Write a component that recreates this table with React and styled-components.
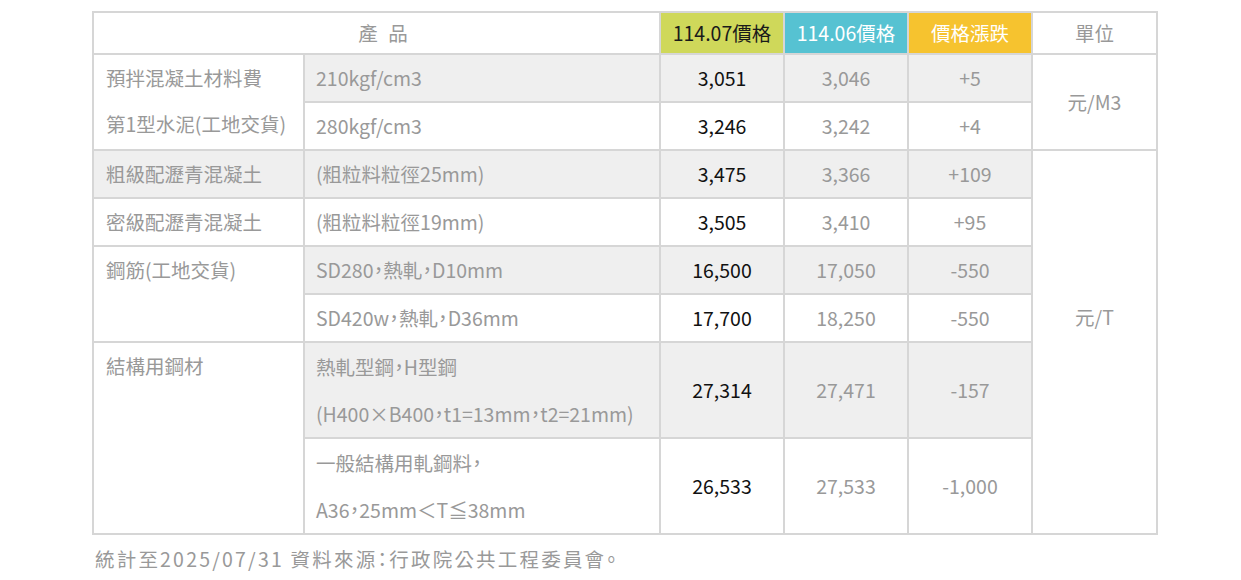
import React from 'react';
import styled, { createGlobalStyle } from 'styled-components';

const GlobalStyle = createGlobalStyle`
  body {
    margin: 0;
    background: #fff;
    font-family: "Noto Sans CJK TC", "Noto Sans", sans-serif;
    font-feature-settings: "palt";
  }
`;

const rows = [
  {
    group: ['預拌混凝土材料費', '第1型水泥(工地交貨)'],
    span: 2,
    spec: ['210kgf/cm3'],
    now: '3,051',
    prev: '3,046',
    diff: '+5',
    unit: { label: '元/M3', span: 2 },
  },
  { spec: ['280kgf/cm3'], now: '3,246', prev: '3,242', diff: '+4' },
  {
    group: ['粗級配瀝青混凝土'],
    spec: ['(粗粒料粒徑25mm)'],
    now: '3,475',
    prev: '3,366',
    diff: '+109',
    unit: { label: '元/T', span: 6, lifted: true },
  },
  {
    group: ['密級配瀝青混凝土'],
    spec: ['(粗粒料粒徑19mm)'],
    now: '3,505',
    prev: '3,410',
    diff: '+95',
  },
  {
    group: ['鋼筋(工地交貨)'],
    span: 2,
    spec: ['SD280，熱軋，D10mm'],
    now: '16,500',
    prev: '17,050',
    diff: '-550',
  },
  { spec: ['SD420w，熱軋，D36mm'], now: '17,700', prev: '18,250', diff: '-550' },
  {
    group: ['結構用鋼材'],
    span: 2,
    spec: ['熱軋型鋼，H型鋼', '(H400×B400，t1=13mm，t2=21mm)'],
    now: '27,314',
    prev: '27,471',
    diff: '-157',
  },
  {
    spec: ['一般結構用軋鋼料，', 'A36，25mm＜T≦38mm'],
    now: '26,533',
    prev: '27,533',
    diff: '-1,000',
  },
];

const Lines = ({ items }) =>
  items.map((line, i) => (
    <React.Fragment key={line}>
      {i > 0 && <br />}
      {line}
    </React.Fragment>
  ));

const PriceTable = () => (
  <Wrapper>
    <Table>
      <colgroup>
        <col style={{ width: 211 }} />
        <col style={{ width: 356 }} />
        <col style={{ width: 124 }} />
        <col style={{ width: 124 }} />
        <col style={{ width: 124 }} />
        <col style={{ width: 125 }} />
      </colgroup>
      <thead>
        <tr>
          <HeadCell colSpan={2} $spaced>
            產 品
          </HeadCell>
          <HeadCell $bg="#cfd85a" $color="#1a1a1a">
            114.07價格
          </HeadCell>
          <HeadCell $bg="#56c2d2" $color="#fff">
            114.06價格
          </HeadCell>
          <HeadCell $bg="#f6c32f" $color="#fff">
            價格漲跌
          </HeadCell>
          <HeadCell>單位</HeadCell>
        </tr>
      </thead>
      <tbody>
        {rows.map((row, i) => (
          <Row key={row.spec[0]} $shade={i % 2 === 0}>
            {row.group && (
              <GroupCell rowSpan={row.span || 1} $plain={!!row.span}>
                <Lines items={row.group} />
              </GroupCell>
            )}
            <SpecCell $tall={row.spec.length > 1}>
              <Lines items={row.spec} />
            </SpecCell>
            <ValueCell $strong>{row.now}</ValueCell>
            <ValueCell>{row.prev}</ValueCell>
            <ValueCell>{row.diff}</ValueCell>
            {row.unit && (
              <UnitCell rowSpan={row.unit.span} $lifted={row.unit.lifted}>
                {row.unit.label}
              </UnitCell>
            )}
          </Row>
        ))}
      </tbody>
    </Table>
    <Note>統計至2025/07/31 資料來源：行政院公共工程委員會。</Note>
  </Wrapper>
);

const App = () => (
  <>
    <GlobalStyle />
    <PriceTable />
  </>
);

// STYLES
const Wrapper = styled.div`
  padding: 11px 0 0 92px;
`;

const Table = styled.table`
  width: 1064px;
  table-layout: fixed;
  border-collapse: collapse;
  font-size: 19.5px;
  color: #999;
`;

const Row = styled.tr`
  background: ${({ $shade }) => ($shade ? '#efefef' : '#fff')};
`;

const Cell = styled.td`
  border: 2px solid #d6d6d6;
  padding: 0 12px;
  line-height: 46px;
  white-space: nowrap;
`;

const HeadCell = styled.th`
  border: 2px solid #d6d6d6;
  padding: 0 0 0 ${({ $spaced }) => ($spaced ? '16px' : '0')};
  line-height: 40px;
  font-weight: 400;
  text-align: center;
  background: ${({ $bg }) => $bg || '#fff'};
  color: ${({ $color }) => $color || '#999'};
  letter-spacing: ${({ $spaced }) => ($spaced ? '3px' : '0')};
`;

const GroupCell = styled(Cell)`
  vertical-align: top;
  ${({ $plain }) => $plain && 'background: #fff;'}
`;

const SpecCell = styled(Cell)`
  padding-left: 11px;
  line-height: ${({ $tall }) => ($tall ? '47px' : '46px')};
`;

const ValueCell = styled(Cell)`
  text-align: center;
  color: ${({ $strong }) => ($strong ? '#111' : '#999')};
`;

const UnitCell = styled(Cell)`
  background: #fff;
  text-align: center;
  vertical-align: middle;
  padding-bottom: ${({ $lifted }) => ($lifted ? '50px' : '0')};
`;

const Note = styled.p`
  margin: 11px 0 0 3px;
  font-size: 19.5px;
  line-height: 26px;
  color: #999;
  letter-spacing: 2.2px;
`;

export default App;
